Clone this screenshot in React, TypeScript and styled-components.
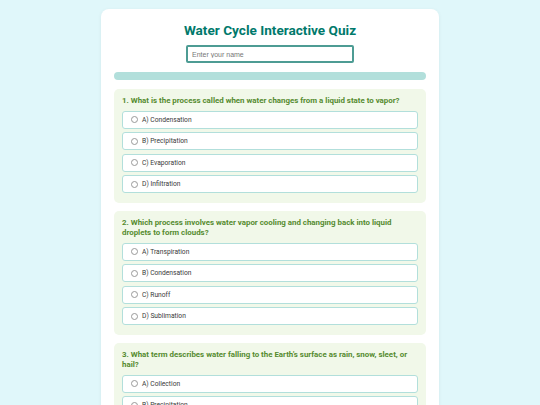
import React from "react";
import styled, { createGlobalStyle } from "styled-components";

const GlobalStyle = createGlobalStyle`
  html, body {
    margin: 0;
    padding: 0;
    background: #e0f7fa;
  }
  body {
    font-family: Roboto, "Liberation Sans", sans-serif;
    padding: 9px 0 0;
  }
`;

const Card = styled.div`
  width: 338px;
  margin: 0 auto;
  background: #ffffff;
  border-radius: 8px;
  padding: 12px 13px 20px;
  box-sizing: border-box;
  box-shadow: 0 1px 4px rgba(0, 0, 0, 0.06);
`;

const Title = styled.h1`
  margin: 0 0 6px;
  text-align: center;
  font-size: 13.6px;
  line-height: 18px;
  font-weight: 700;
  color: #00796b;
`;

const NameInput = styled.input`
  display: block;
  margin: 0 auto;
  width: 168px;
  height: 18px;
  box-sizing: border-box;
  border: 2px solid #4d9c94;
  border-radius: 2px;
  padding: 0 4px;
  font-family: "Liberation Sans", Arial, sans-serif;
  font-size: 7px;
  color: #333;
  &::placeholder {
    color: #777;
  }
`;

const Progress = styled.div`
  margin: 9px 0 9px;
  height: 8px;
  border-radius: 4px;
  background: #b2dfdb;
`;

const Block = styled.div`
  background: #f1f8e9;
  border-radius: 5px;
  padding: 7px 8px 10px;
  margin-bottom: 8px;
`;

const Question = styled.div`
  font-size: 7.9px;
  line-height: 10px;
  font-weight: 700;
  color: #558b2f;
  margin-bottom: 4.5px;
`;

const Options = styled.div`
  display: flex;
  flex-direction: column;
  gap: 3.5px;
`;

const Option = styled.label`
  display: flex;
  align-items: center;
  gap: 4px;
  height: 18px;
  box-sizing: border-box;
  background: #ffffff;
  border: 1px solid #b2dfdb;
  border-radius: 3px;
  padding: 0 8px;
  font-size: 6.7px;
  color: #3a3a3a;
`;

const Radio = styled.span`
  width: 5px;
  height: 5px;
  border: 0.7px solid #999;
  border-radius: 50%;
  background: #fff;
  flex-shrink: 0;
`;

const questions = [
  {
    q: "1. What is the process called when water changes from a liquid state to vapor?",
    opts: ["A) Condensation", "B) Precipitation", "C) Evaporation", "D) Infiltration"],
  },
  {
    q: "2. Which process involves water vapor cooling and changing back into liquid droplets to form clouds?",
    opts: ["A) Transpiration", "B) Condensation", "C) Runoff", "D) Sublimation"],
  },
  {
    q: "3. What term describes water falling to the Earth's surface as rain, snow, sleet, or hail?",
    opts: ["A) Collection", "B) Precipitation", "C) Evaporation", "D) Infiltration"],
  },
];

export default function App() {
  return (
    <>
      <GlobalStyle />
      <Card>
        <Title>Water Cycle Interactive Quiz</Title>
        <NameInput placeholder="Enter your name" />
        <Progress />
        {questions.map((item) => (
          <Block key={item.q}>
            <Question>{item.q}</Question>
            <Options>
              {item.opts.map((o) => (
                <Option key={o}>
                  <Radio />
                  {o}
                </Option>
              ))}
            </Options>
          </Block>
        ))}
      </Card>
    </>
  );
}
